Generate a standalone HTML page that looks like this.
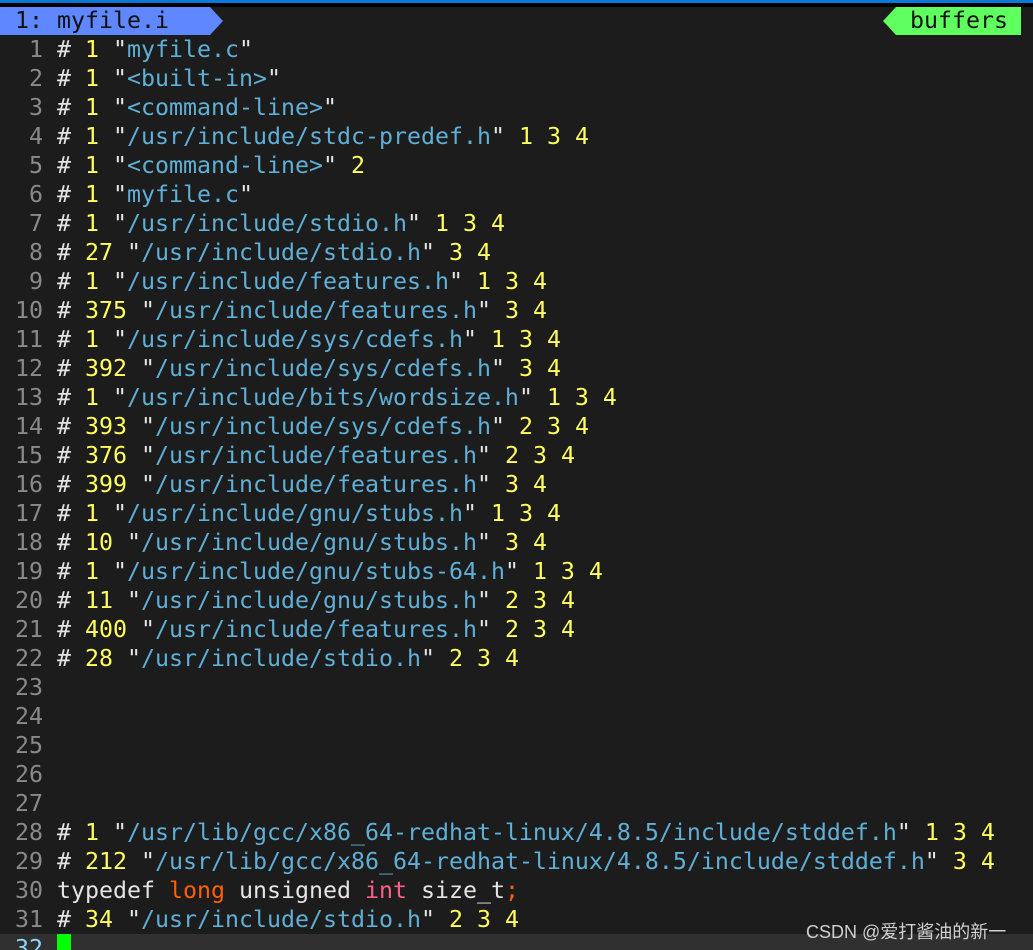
<!DOCTYPE html>
<html style="width:1033px;height:950px;overflow:hidden"><head><meta charset="utf-8"><style>
body{margin:0;width:1033px;height:950px;background:#1c1c1c;overflow:hidden;position:relative;font-family:"DejaVu Sans Mono","Liberation Mono",monospace;font-size:23.25px;}
.top{position:absolute;left:0;top:0;width:1033px;height:3px;background:#0a78d7}
.tb{position:absolute;left:0;top:3px;width:1033px;height:4px;background:#000}
.tab{position:absolute;left:0;top:7px;height:28px;width:210px;background:#5f87ff;color:#111;line-height:28px;padding-left:15px;box-sizing:border-box}
.tarr{position:absolute;left:210px;top:7px;width:0;height:0;border-top:14px solid transparent;border-bottom:14px solid transparent;border-left:13px solid #5f87ff}
.buf{position:absolute;left:896px;top:7px;height:28px;width:125px;background:#5fff5f;color:#111;line-height:28px;padding-left:14px;box-sizing:border-box}
.barr{position:absolute;left:883px;top:7px;width:0;height:0;border-top:14px solid transparent;border-bottom:14px solid transparent;border-right:13px solid #5fff5f}
.code{position:absolute;left:1px;top:35px;white-space:pre;line-height:29px;color:#e4e4e4}
.n{color:#8a8a8a}.y{color:#ffff5f}.s{color:#5fafd7}.o{color:#ff5f00}.p{color:#ff5f87}
.cl{position:absolute;left:0;top:934px;width:1033px;height:16px;background:#303030}
.cur{position:absolute;left:57px;top:934px;width:14px;height:16px;background:#00ff00}
.wm{position:absolute;left:806px;top:918px;font-family:"Liberation Sans","Noto Sans CJK SC",sans-serif;font-size:18px;color:#d0d0d0}
</style></head><body>
<div class="top"></div><div class="tb"></div>
<div class="tab">1: myfile.i</div><div class="tarr"></div>
<div class="barr"></div><div class="buf">buffers</div>
<div class="cl"></div>
<div class="code"><span class="n">  1 </span># <span class="y">1</span> "<span class="s">myfile.c</span>"
<span class="n">  2 </span># <span class="y">1</span> "<span class="s">&lt;built-in&gt;</span>"
<span class="n">  3 </span># <span class="y">1</span> "<span class="s">&lt;command-line&gt;</span>"
<span class="n">  4 </span># <span class="y">1</span> "<span class="s">/usr/include/stdc-predef.h</span>" <span class="y">1 3 4</span>
<span class="n">  5 </span># <span class="y">1</span> "<span class="s">&lt;command-line&gt;</span>" <span class="y">2</span>
<span class="n">  6 </span># <span class="y">1</span> "<span class="s">myfile.c</span>"
<span class="n">  7 </span># <span class="y">1</span> "<span class="s">/usr/include/stdio.h</span>" <span class="y">1 3 4</span>
<span class="n">  8 </span># <span class="y">27</span> "<span class="s">/usr/include/stdio.h</span>" <span class="y">3 4</span>
<span class="n">  9 </span># <span class="y">1</span> "<span class="s">/usr/include/features.h</span>" <span class="y">1 3 4</span>
<span class="n"> 10 </span># <span class="y">375</span> "<span class="s">/usr/include/features.h</span>" <span class="y">3 4</span>
<span class="n"> 11 </span># <span class="y">1</span> "<span class="s">/usr/include/sys/cdefs.h</span>" <span class="y">1 3 4</span>
<span class="n"> 12 </span># <span class="y">392</span> "<span class="s">/usr/include/sys/cdefs.h</span>" <span class="y">3 4</span>
<span class="n"> 13 </span># <span class="y">1</span> "<span class="s">/usr/include/bits/wordsize.h</span>" <span class="y">1 3 4</span>
<span class="n"> 14 </span># <span class="y">393</span> "<span class="s">/usr/include/sys/cdefs.h</span>" <span class="y">2 3 4</span>
<span class="n"> 15 </span># <span class="y">376</span> "<span class="s">/usr/include/features.h</span>" <span class="y">2 3 4</span>
<span class="n"> 16 </span># <span class="y">399</span> "<span class="s">/usr/include/features.h</span>" <span class="y">3 4</span>
<span class="n"> 17 </span># <span class="y">1</span> "<span class="s">/usr/include/gnu/stubs.h</span>" <span class="y">1 3 4</span>
<span class="n"> 18 </span># <span class="y">10</span> "<span class="s">/usr/include/gnu/stubs.h</span>" <span class="y">3 4</span>
<span class="n"> 19 </span># <span class="y">1</span> "<span class="s">/usr/include/gnu/stubs-64.h</span>" <span class="y">1 3 4</span>
<span class="n"> 20 </span># <span class="y">11</span> "<span class="s">/usr/include/gnu/stubs.h</span>" <span class="y">2 3 4</span>
<span class="n"> 21 </span># <span class="y">400</span> "<span class="s">/usr/include/features.h</span>" <span class="y">2 3 4</span>
<span class="n"> 22 </span># <span class="y">28</span> "<span class="s">/usr/include/stdio.h</span>" <span class="y">2 3 4</span>
<span class="n"> 23 </span>
<span class="n"> 24 </span>
<span class="n"> 25 </span>
<span class="n"> 26 </span>
<span class="n"> 27 </span>
<span class="n"> 28 </span># <span class="y">1</span> "<span class="s">/usr/lib/gcc/x86_64-redhat-linux/4.8.5/include/stddef.h</span>" <span class="y">1 3 4</span>
<span class="n"> 29 </span># <span class="y">212</span> "<span class="s">/usr/lib/gcc/x86_64-redhat-linux/4.8.5/include/stddef.h</span>" <span class="y">3 4</span>
<span class="n"> 30 </span>typedef <span class="o">long</span> unsigned <span class="p">int</span> size_t<span class="o">;</span>
<span class="n"> 31 </span># <span class="y">34</span> "<span class="s">/usr/include/stdio.h</span>" <span class="y">2 3 4</span>
<span class="n" style="color:#87d7ff"> 32 </span></div>
<div class="cur"></div>
<div class="wm">CSDN @爱打酱油的新一</div>
</body></html>
